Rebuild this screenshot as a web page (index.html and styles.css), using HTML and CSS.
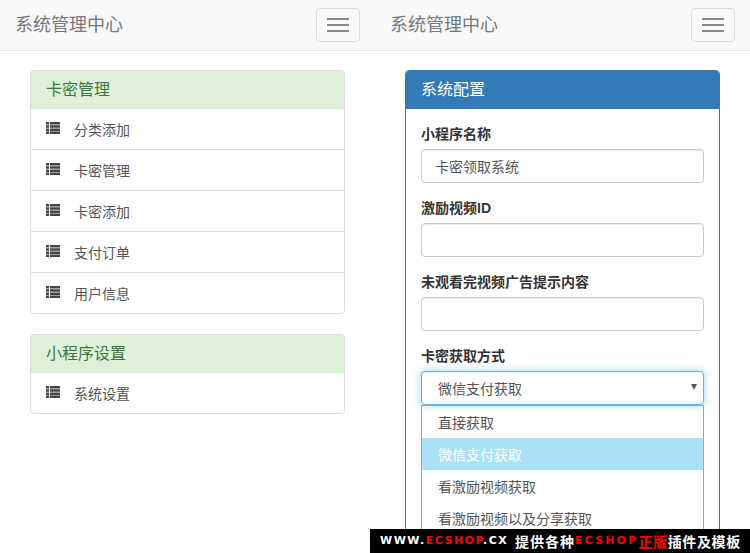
FILE: index.html
```html
<!DOCTYPE html>
<html lang="zh-CN">
<head>
  <meta charset="UTF-8">
  <meta name="viewport" content="width=device-width, initial-scale=1.0">
  <title>系统管理中心</title>
  <link rel="stylesheet" href="styles.css">
</head>
<body>
  <div class="page">
    <!-- left frame: menu -->
    <div class="pane">
      <div class="navbar">
        <span class="brand">系统管理中心</span>
        <button class="toggle" type="button"><span></span><span></span><span></span></button>
      </div>
      <div class="content">
        <div class="panel panel-green">
          <div class="panel-heading">卡密管理</div>
          <a class="menu-item"><svg class="icon" viewBox="0 0 14 12"><path d="M0 0h3v2.6H0zM4 0h10v2.6H4zM0 3.2h3v2.6H0zM4 3.2h10v2.6H4zM0 6.4h3V9H0zM4 6.4h10V9H4zM0 9.6h3V12H0zM4 9.6h10V12H4z"/></svg>分类添加</a>
          <a class="menu-item"><svg class="icon" viewBox="0 0 14 12"><path d="M0 0h3v2.6H0zM4 0h10v2.6H4zM0 3.2h3v2.6H0zM4 3.2h10v2.6H4zM0 6.4h3V9H0zM4 6.4h10V9H4zM0 9.6h3V12H0zM4 9.6h10V12H4z"/></svg>卡密管理</a>
          <a class="menu-item"><svg class="icon" viewBox="0 0 14 12"><path d="M0 0h3v2.6H0zM4 0h10v2.6H4zM0 3.2h3v2.6H0zM4 3.2h10v2.6H4zM0 6.4h3V9H0zM4 6.4h10V9H4zM0 9.6h3V12H0zM4 9.6h10V12H4z"/></svg>卡密添加</a>
          <a class="menu-item"><svg class="icon" viewBox="0 0 14 12"><path d="M0 0h3v2.6H0zM4 0h10v2.6H4zM0 3.2h3v2.6H0zM4 3.2h10v2.6H4zM0 6.4h3V9H0zM4 6.4h10V9H4zM0 9.6h3V12H0zM4 9.6h10V12H4z"/></svg>支付订单</a>
          <a class="menu-item"><svg class="icon" viewBox="0 0 14 12"><path d="M0 0h3v2.6H0zM4 0h10v2.6H4zM0 3.2h3v2.6H0zM4 3.2h10v2.6H4zM0 6.4h3V9H0zM4 6.4h10V9H4zM0 9.6h3V12H0zM4 9.6h10V12H4z"/></svg>用户信息</a>
        </div>
        <div class="panel panel-green">
          <div class="panel-heading">小程序设置</div>
          <a class="menu-item"><svg class="icon" viewBox="0 0 14 12"><path d="M0 0h3v2.6H0zM4 0h10v2.6H4zM0 3.2h3v2.6H0zM4 3.2h10v2.6H4zM0 6.4h3V9H0zM4 6.4h10V9H4zM0 9.6h3V12H0zM4 9.6h10V12H4z"/></svg>系统设置</a>
        </div>
      </div>
    </div>

    <!-- right frame: config form -->
    <div class="pane">
      <div class="navbar">
        <span class="brand">系统管理中心</span>
        <button class="toggle" type="button"><span></span><span></span><span></span></button>
      </div>
      <div class="content">
        <div class="panel panel-blue">
          <div class="panel-heading">系统配置</div>
          <div class="panel-body">
            <div class="form-group">
              <label>小程序名称</label>
              <input class="form-control" type="text" value="卡密领取系统">
            </div>
            <div class="form-group">
              <label>激励视频ID</label>
              <input class="form-control" type="text">
            </div>
            <div class="form-group">
              <label>未观看完视频广告提示内容</label>
              <input class="form-control" type="text">
            </div>
            <div class="form-group">
              <label>卡密获取方式</label>
              <div class="select-box">微信支付获取<span class="caret"></span></div>
              <ul class="select-list">
                <li>直接获取</li>
                <li class="active">微信支付获取</li>
                <li>看激励视频获取</li>
                <li>看激励视频以及分享获取</li>
              </ul>
            </div>
          </div>
        </div>
      </div>
    </div>
  </div>

  <div class="watermark"><span class="wm-site wm-first">WWW.<b>ECSHOP</b>.CX</span><span class="wm-cn">提供各种</span><span class="wm-site wm-second"><b>ECSHOP</b></span><span class="wm-cn wm-tail"><b>正版</b>插件及模板</span></div>
</body>
</html>
```

FILE: styles.css
```css
html, body {
  height: 100%;
}
body {
  margin: 0;
  overflow: hidden;
  font-family: "Liberation Sans", "Noto Sans CJK SC", sans-serif;
  font-size: 14px;
  line-height: 20px;
  color: #333;
  background-color: #fff;
}
.page {
  display: flex;
  width: 750px;
  height: 553px;
  overflow: hidden;
}
.pane {
  width: 375px;
  flex: none;
}
.navbar {
  display: flex;
  justify-content: space-between;
  align-items: center;
  height: 50px;
  padding: 0 15px;
  box-sizing: content-box;
  width: 345px;
  background-color: #f8f8f8;
  border-bottom: 1px solid #e7e7e7;
}
.brand {
  font-size: 18px;
  color: #777;
}
.toggle {
  display: flex;
  flex-direction: column;
  justify-content: center;
  gap: 4px;
  width: 44px;
  height: 34px;
  padding: 0 10px;
  background: transparent;
  border: 1px solid #ddd;
  border-radius: 4px;
}
.toggle span {
  display: block;
  width: 22px;
  height: 2px;
  background-color: #888;
}
.content {
  padding: 19px 30px 0;
}
.panel {
  margin-bottom: 20px;
  background-color: #fff;
  border: 1px solid #ddd;
  border-radius: 4px;
}
.panel-heading {
  height: 37px;
  padding: 0 15px;
  font-size: 16px;
  line-height: 37px;
  border-bottom: 1px solid #ddd;
  border-radius: 3px 3px 0 0;
}
.panel-green .panel-heading {
  color: #3c763d;
  background-color: #dff0d8;
}
.panel-blue {
  border-color: #337ab7;
}
.panel-blue .panel-heading {
  color: #fff;
  background-color: #337ab7;
  border-bottom-color: #337ab7;
}
.menu-item {
  display: flex;
  align-items: center;
  height: 38px;
  padding: 2px 15px 0;
  color: #555;
  border-bottom: 1px solid #ddd;
}
.menu-item:last-child {
  border-bottom: none;
}
.icon {
  width: 14px;
  height: 12px;
  margin: -4px 14px 0 0;
  fill: #444;
}
.panel-body {
  padding: 15px;
}
.form-group {
  margin-bottom: 15px;
}
.form-group label {
  display: block;
  margin-bottom: 5px;
  font-weight: 700;
}
.form-control {
  display: block;
  width: 100%;
  height: 34px;
  padding: 6px 13px;
  box-sizing: border-box;
  font: inherit;
  color: #555;
  background-color: #fff;
  border: 1px solid #ccc;
  border-radius: 4px;
  box-shadow: inset 0 1px 1px rgba(0, 0, 0, 0.075);
}
.select-box {
  position: relative;
  height: 34px;
  padding: 7px 16px 5px;
  box-sizing: border-box;
  color: #555;
  background-color: #fff;
  border: 1px solid #66afe9;
  border-radius: 4px;
  box-shadow: inset 0 1px 1px rgba(0, 0, 0, 0.075), 0 0 8px rgba(102, 175, 233, 0.6);
}
.caret {
  position: absolute;
  top: 12px;
  right: 6px;
  border-top: 6px solid #555;
  border-left: 3px solid transparent;
  border-right: 3px solid transparent;
}
.select-list {
  margin: 0;
  padding: 0;
  list-style: none;
  color: #555;
  border: 1px solid #c09f6a;
}
.select-list li {
  height: 32px;
  padding: 0 16px;
  line-height: 34px;
}
.select-list .active {
  color: #fff;
  background-color: #ace1f5;
}
.watermark {
  position: absolute;
  left: 370px;
  bottom: 0;
  display: flex;
  align-items: center;
  width: 380px;
  height: 24px;
  padding-left: 10px;
  box-sizing: border-box;
  color: #fff;
  background-color: #000;
  white-space: nowrap;
}
.watermark b {
  color: #f00;
  font-weight: 700;
}
.wm-site {
  font-family: "DejaVu Sans", sans-serif;
  font-size: 11px;
  font-weight: 700;
  letter-spacing: 1.5px;
}
.wm-first {
  width: 135px;
  flex: none;
}
.wm-second {
  letter-spacing: 2.2px;
}
.wm-cn {
  font-family: "Noto Sans CJK SC", sans-serif;
  font-size: 14px;
  font-weight: 700;
  letter-spacing: 1px;
}
.wm-tail {
  letter-spacing: 0.6px;
}
```
